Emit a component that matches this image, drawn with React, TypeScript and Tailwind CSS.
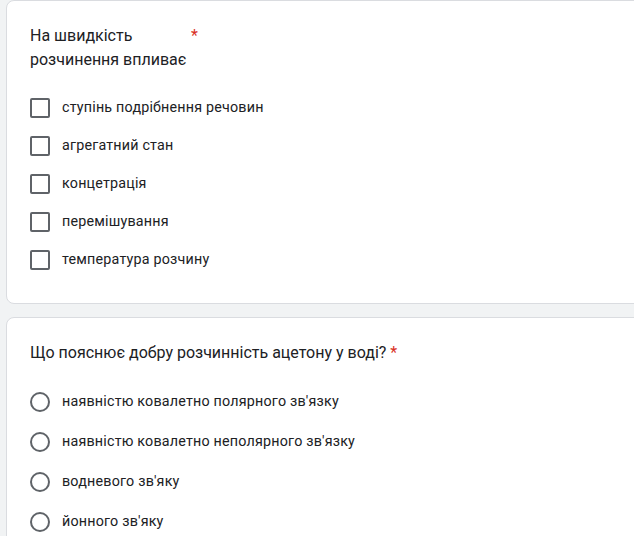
import React from 'react';

const checkOptions = [
  'ступінь подрібнення речовин',
  'агрегатний стан',
  'концетрація',
  'перемішування',
  'температура розчину',
];

const radioOptions = [
  'наявністю ковалетно полярного зв\'язку',
  'наявністю ковалетно неполярного зв\'язку',
  'водневого зв\'яку',
  'йонного зв\'яку',
];

const Card: React.FC<{ children: React.ReactNode }> = ({ children }) => (
  <div className="w-[660px] bg-white border border-[#dadce0] rounded-lg pl-[23px] pt-[23px] pb-[24px]">
    {children}
  </div>
);

export default function App() {
  return (
    <div
      className="min-h-[536px] bg-[#f1f3f4] pl-[6px] overflow-hidden text-[#202124]"
      style={{ fontFamily: 'Roboto, "Noto Sans", Arial, sans-serif' }}
    >
      <div className="flex flex-col gap-[13px]">
        <Card>
          <div className="flex text-base leading-6">
            <div className="w-[160px]">На швидкість розчинення впливає</div>
            <span className="text-[#d93025] ml-[1px]">*</span>
          </div>
          <div className="mt-[17px] flex flex-col">
            {checkOptions.map((opt) => (
              <div key={opt} className="h-[38px] flex items-center">
                <div className="w-[20px] h-[20px] border-2 border-[#5f6368] rounded-[2px]" />
                <span className="ml-3 text-[14.3px] tracking-[0.2px]">{opt}</span>
              </div>
            ))}
          </div>
        </Card>
        <Card>
          <div className="text-base leading-6">
            Що пояснює добру розчинність ацетону у воді? <span className="text-[#d93025]">*</span>
          </div>
          <div className="mt-[17px] flex flex-col">
            {radioOptions.map((opt) => (
              <div key={opt} className="h-[40px] flex items-center">
                <div className="w-[20px] h-[20px] border-2 border-[#5f6368] rounded-full" />
                <span className="ml-3 text-[14.3px] tracking-[0.2px]">{opt}</span>
              </div>
            ))}
          </div>
        </Card>
      </div>
    </div>
  );
}
